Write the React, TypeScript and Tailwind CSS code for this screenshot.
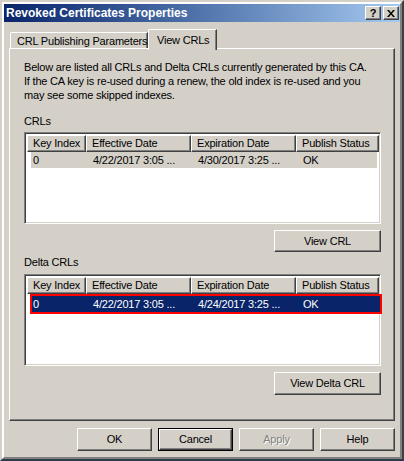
import React from 'react';

const raised =
  'border border-t-white border-l-white border-r-[#404040] border-b-[#404040] shadow-[inset_-1px_-1px_0_#808080]';
const sunken =
  'border border-t-[#808080] border-l-[#808080] border-r-white border-b-white shadow-[inset_1px_1px_0_#404040,inset_-1px_-1px_0_#d4d0c8]';

const headers = [
  { label: 'Key Index', cls: 'w-[59px]' },
  { label: 'Effective Date', cls: 'w-[105px]' },
  { label: 'Expiration Date', cls: 'w-[105px]' },
  { label: 'Publish Status', cls: 'w-[83px]' },
];

interface ListProps {
  row: string[];
  active?: boolean;
}

function ListView({ row, active = false }: ListProps) {
  return (
    <div className={`h-[92px] w-full bg-white p-[2px] ${sunken} overflow-visible`}>
      <div className="flex h-[17px]">
        {headers.map((h) => (
          <div
            key={h.label}
            className={`${h.cls} shrink-0 overflow-hidden bg-[#d4d0c8] pl-[5px] leading-[15px] ${raised}`}
          >
            {h.label}
          </div>
        ))}
      </div>
      {active ? (
        <div className="ml-[3px] flex h-[20px] w-[352px] items-center border-2 border-[#ff0000] bg-[#0a246a] text-white">
          <div className="w-[59px] pl-[1px]">{row[0]}</div>
          <div className="w-[105px] pl-[2px]">{row[1]}</div>
          <div className="w-[105px] pl-[2px]">{row[2]}</div>
          <div className="flex-1 pl-[2px]">{row[3]}</div>
        </div>
      ) : (
        <div className="ml-[4px] mr-[1px] flex h-[16px] items-center bg-[#d4d0c8]">
          <div className="w-[60px] pl-[2px]">{row[0]}</div>
          <div className="w-[105px] pl-[2px]">{row[1]}</div>
          <div className="w-[105px] pl-[2px]">{row[2]}</div>
          <div className="flex-1 pl-[2px]">{row[3]}</div>
        </div>
      )}
    </div>
  );
}

function Btn({
  children,
  className = '',
  isDefault = false,
  disabled = false,
}: {
  children: React.ReactNode;
  className?: string;
  isDefault?: boolean;
  disabled?: boolean;
}) {
  const body = (
    <div
      className={`flex h-full w-full items-center justify-center bg-[#d4d0c8] ${raised} ${
        disabled ? 'text-[#808080] [text-shadow:1px_1px_0_#ffffff]' : 'text-black'
      }`}
    >
      {children}
    </div>
  );
  if (isDefault) {
    return <div className={`border border-black ${className}`}>{body}</div>;
  }
  return <div className={className}>{body}</div>;
}

export default function App() {
  return (
    <div className="h-[461px] w-[404px] overflow-hidden whitespace-nowrap border-2 border-t-[#d4d0c8] border-l-[#d4d0c8] border-r-[#404040] border-b-[#2c3b4c] bg-[#d4d0c8] font-['Liberation_Sans',Arial,sans-serif] text-[11px] tracking-[-0.2px] text-black">
      <div className="flex h-full flex-col border-2 border-t-white border-l-white border-r-[#808080] border-b-[#808080]">
        {/* title bar */}
        <div className="flex h-[18px] shrink-0 items-center bg-gradient-to-r from-[#0a246a] to-[#a6caf0] pl-[2px] pr-[1px]">
          <span className="flex-1 text-[12px] font-bold tracking-normal text-white">Revoked Certificates Properties</span>
          <div className="flex gap-[2px]">
            <div className={`flex h-[14px] w-[16px] items-center justify-center bg-[#d4d0c8] text-[11px] font-bold leading-none ${raised}`}>
              ?
            </div>
            <div className={`flex h-[14px] w-[16px] items-center justify-center bg-[#d4d0c8] ${raised}`}>
              <svg width="8" height="7" viewBox="0 0 8 7">
                <path d="M0 0h2l2 2.5L6 0h2L5 3.5 8 7H6L4 4.5 2 7H0l3-3.5z" fill="#000" />
              </svg>
            </div>
          </div>
        </div>

        <div className="flex flex-1 flex-col px-[5px] pt-[7px]">
          {/* tabs */}
          <div className="flex h-[20px] items-end pl-[1px]">
            <div className="flex h-[17px] w-[138px] items-center rounded-tl-[2px] border-t border-l border-r border-t-white border-l-white border-r-[#404040] pl-[6px] shadow-[inset_-1px_0_0_#808080]">
              CRL Publishing Parameters
            </div>
            <div className="relative z-10 -mb-px flex h-[21px] w-[69px] items-center rounded-tl-[2px] border-t border-l border-r border-t-white border-l-white border-r-[#404040] bg-[#d4d0c8] pl-[8px] shadow-[inset_-1px_0_0_#808080]">
              View CRLs
            </div>
          </div>

          {/* tab panel */}
          <div className={`-mt-px flex h-[373px] flex-col pl-[14px] pr-[13px] pt-[11px] ${raised}`}>
            <p className="leading-[14px]">
              Below are listed all CRLs and Delta CRLs currently generated by this CA.
              <br />
              If the CA key is re-used during a renew, the old index is re-used and you
              <br />
              may see some skipped indexes.
            </p>
            <div className="mt-[12px] leading-[14px]">CRLs</div>
            <div className="mt-[4px]">
              <ListView row={['0', '4/22/2017 3:05 ...', '4/30/2017 3:25 ...', 'OK']} />
            </div>
            <div className="mt-[6px] flex justify-end">
              <Btn className="h-[22px] w-[107px]">View CRL</Btn>
            </div>
            <div className="mt-[3px] leading-[14px]">Delta CRLs</div>
            <div className="mt-[5px]">
              <ListView row={['0', '4/22/2017 3:05 ...', '4/24/2017 3:25 ...', 'OK']} active />
            </div>
            <div className="mt-[6px] flex justify-end">
              <Btn className="h-[23px] w-[107px]">View Delta CRL</Btn>
            </div>
          </div>

          {/* dialog buttons */}
          <div className="mt-[7px] flex justify-end gap-[6px]">
            <Btn className="h-[23px] w-[75px]">OK</Btn>
            <Btn className="h-[23px] w-[75px]" isDefault>
              Cancel
            </Btn>
            <Btn className="h-[23px] w-[75px]" disabled>
              Apply
            </Btn>
            <Btn className="h-[23px] w-[75px]">Help</Btn>
          </div>
        </div>
      </div>
    </div>
  );
}
